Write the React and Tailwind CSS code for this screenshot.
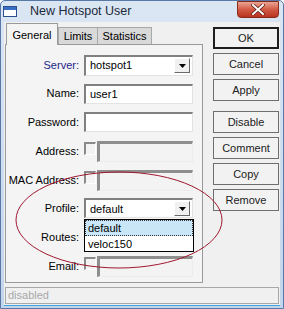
import React from 'react';

const labelCls = 'w-[78px] pr-[5px] text-right shrink-0 whitespace-nowrap';

function Field({ children, width = 'w-[109px]' }) {
  return (
    <div className={`${width} h-[20px] bg-white border-t-2 border-l-2 border-t-[#808080] border-l-[#808080] border-b border-r border-b-[#e3e3e3] border-r-[#e3e3e3] flex items-center pl-[4px]`}>
      {children}
    </div>
  );
}

function CheckField() {
  return (
    <div className="flex items-start h-[20px]">
      <div className="w-[12px] h-[13px] mt-[1px] border-t-2 border-l-2 border-t-[#8a8a8a] border-l-[#8a8a8a] border-b border-r border-b-white border-r-white bg-[#f3f3f3]" />
      <div className="ml-[1px] w-[96px] h-[21px] border-t-[3px] border-l-[3px] border-t-[#8e8e8e] border-l-[#8e8e8e] border-b border-r border-b-[#ececec] border-r-[#ececec] bg-[#f3f3f3]" />
    </div>
  );
}

function Row({ label, color = 'text-black', children }) {
  return (
    <div className="flex items-center h-[20px]">
      <div className={`${labelCls} ${color}`}>{label}</div>
      {children}
    </div>
  );
}

function Arrow() {
  return (
    <div className="w-[16px] h-[15px] mr-[2px] bg-[#f0f0f0] border border-t-white border-l-white border-b-[#6a6a6a] border-r-[#6a6a6a] flex items-center justify-center">
      <svg width="7" height="4" viewBox="0 0 7 4"><path d="M0 0 H7 L3.5 4 Z" fill="#000" /></svg>
    </div>
  );
}

function Btn({ children, primary }) {
  return (
    <div
      className={`w-[66px] h-[22px] flex items-center justify-center bg-[#f2f2f2] text-[#222] ${
        primary ? 'border-2 border-[#1e1e1e]' : 'border border-[#6e6e6e]'
      }`}
    >
      {children}
    </div>
  );
}

export default function App() {
  return (
    <div className="relative w-[284px] h-[309px] overflow-hidden font-['Liberation_Sans',Arial,sans-serif] text-[11px] text-black">
      <div className="w-full h-full flex flex-col border border-[#5878a8] rounded-t-[5px] bg-gradient-to-b from-[#dbe6f3] to-[#c3d5ec]">
        {/* Title bar */}
        <div className="h-[21px] flex items-center shrink-0 relative">
          <div className="ml-[2px] w-[14px] h-[11px] border border-[#2b4f8c] bg-white">
            <div className="h-[3px] bg-[#3a6fc4]" />
          </div>
          <span className="ml-[13px] text-[12.5px] text-[#1c2a3c]">New Hotspot User</span>
          <div className="absolute right-[4px] top-0 w-[42px] h-[17px] rounded-b-[4px] border border-[#8a2a1c] bg-gradient-to-b from-[#e9a594] via-[#d25a44] to-[#b8321f] flex items-center justify-center">
            <svg width="14" height="11" viewBox="0 0 14 11">
              <path d="M2 1 L12 10 M12 1 L2 10" stroke="#5a1a10" strokeWidth="3.4" strokeLinecap="square" />
              <path d="M2 1 L12 10 M12 1 L2 10" stroke="#ffffff" strokeWidth="2" strokeLinecap="square" />
            </svg>
          </div>
        </div>

        {/* Client area */}
        <div className="flex-1 mx-[3px] mb-[3px] bg-[#f0f0f0] flex flex-col border-b border-b-[#3aa6dc]">
          <div className="flex flex-1">
            {/* Tabs + panel */}
            <div className="ml-[1px] flex flex-col w-[198px]">
              <div className="flex items-end h-[22px] pl-[1px]">
                <div className="w-[52px] h-[22px] bg-[#f4f4f4] border border-b-0 border-[#9a9a9a] flex items-center justify-center pt-[2px] relative z-10 -mb-px">
                  General
                </div>
                <div className="w-[40px] h-[17px] bg-[#d9d9d9] border border-b-0 border-[#a8a8a8] flex items-center justify-center">
                  Limits
                </div>
                <div className="w-[54px] h-[17px] bg-[#d9d9d9] border border-b-0 border-l-0 border-[#a8a8a8] flex items-center justify-center">
                  Statistics
                </div>
              </div>
              <div className="h-[239px] border border-[#9a9a9a] bg-[#f4f4f4] flex flex-col gap-[8.7px] pt-[10px]">
                <Row label="Server:" color="text-[#23268a]">
                  <div className="w-[109px] h-[21px] bg-white border-t-2 border-l-2 border-t-[#808080] border-l-[#808080] border-b border-r border-b-[#e3e3e3] border-r-[#e3e3e3] flex items-center">
                    <span className="pl-[4px] flex-1">hotspot1</span>
                    <Arrow />
                  </div>
                </Row>
                <Row label="Name:">
                  <Field>user1</Field>
                </Row>
                <Row label="Password:">
                  <Field />
                </Row>
                <Row label="Address:">
                  <CheckField />
                </Row>
                <Row label="MAC Address:">
                  <CheckField />
                </Row>
                <Row label="Profile:">
                  <div className="relative">
                    <div className="w-[109px] h-[20px] bg-white border-t-2 border-l-2 border-t-[#808080] border-l-[#808080] border-b border-r border-b-[#e3e3e3] border-r-[#e3e3e3] flex items-center">
                      <span className="pl-[4px] flex-1">default</span>
                      <Arrow />
                    </div>
                    <div className="absolute left-0 top-[21px] w-[110px] h-[33px] bg-white border border-black z-20 flex flex-col">
                      <div className="h-[16px] bg-[#c8e6f6] border border-dotted border-[#333] flex items-center pl-[2px]">default</div>
                      <div className="h-[15px] flex items-center pl-[3px]">veloc150</div>
                    </div>
                  </div>
                </Row>
                <Row label="Routes:">
                  <CheckField />
                </Row>
                <Row label="Email:">
                  <CheckField />
                </Row>
              </div>
            </div>

            {/* Buttons */}
            <div className="ml-[10px] mt-[5px] flex flex-col gap-[4px]">
              <Btn primary>OK</Btn>
              <Btn>Cancel</Btn>
              <Btn>Apply</Btn>
              <div className="h-[2px]" />
              <Btn>Disable</Btn>
              <Btn>Comment</Btn>
              <Btn>Copy</Btn>
              <Btn>Remove</Btn>
            </div>
          </div>

          <div className="mx-[1px] mt-[4px] mb-[1px] h-[17px] border border-[#a8a8a8] flex items-center pl-[2px] text-[#a8a8a8]">
            disabled
          </div>
        </div>
      </div>

      {/* red hand-drawn ellipse over the dialog */}
      <svg className="absolute left-0 top-0 pointer-events-none" width="284" height="309" viewBox="0 0 284 309">
        <ellipse cx="119" cy="220" rx="103" ry="48" fill="none" stroke="#a01830" strokeWidth="1" />
      </svg>
    </div>
  );
}
